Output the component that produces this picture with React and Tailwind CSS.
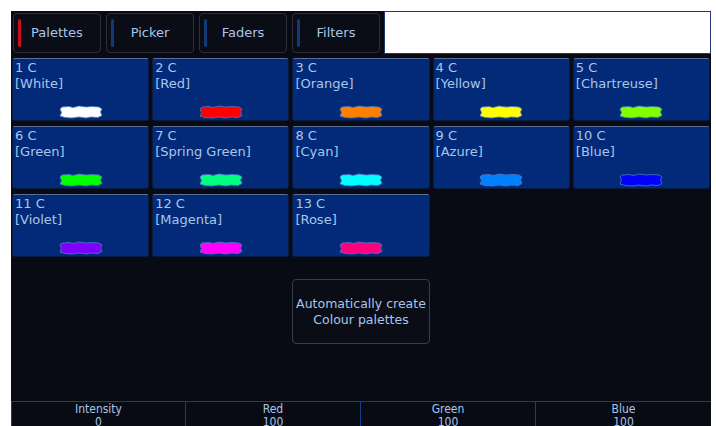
import React from 'react';

const tabs = [
  { label: 'Palettes', stripe: 'bg-[#c8101c]' },
  { label: 'Picker', stripe: 'bg-[#123a78]' },
  { label: 'Faders', stripe: 'bg-[#123a78]' },
  { label: 'Filters', stripe: 'bg-[#123a78]' },
];

const palettes = [
  { n: 1, name: 'White', color: '#ffffff' },
  { n: 2, name: 'Red', color: '#ff0000' },
  { n: 3, name: 'Orange', color: '#ff7f00' },
  { n: 4, name: 'Yellow', color: '#ffff00' },
  { n: 5, name: 'Chartreuse', color: '#7fff00' },
  { n: 6, name: 'Green', color: '#00ff00' },
  { n: 7, name: 'Spring Green', color: '#00ff7f' },
  { n: 8, name: 'Cyan', color: '#00ffff' },
  { n: 9, name: 'Azure', color: '#007fff' },
  { n: 10, name: 'Blue', color: '#0000ff' },
  { n: 11, name: 'Violet', color: '#7f00ff' },
  { n: 12, name: 'Magenta', color: '#ff00ff' },
  { n: 13, name: 'Rose', color: '#ff007f' },
];

const faders = [
  { label: 'Intensity', value: 0 },
  { label: 'Red', value: 100 },
  { label: 'Green', value: 100 },
  { label: 'Blue', value: 100 },
];

// brush-stroke blob used as the colour swatch
function Swatch({ color }) {
  return (
    <svg width="44" height="14" viewBox="0 0 44 14">
      <path
        d="M3 2 L10 1.5 L14 2.5 L20 1 L27 2 L33 1.5 L40 2 L43 4 L41.5 7 L43 10.5 L39 12.5 L32 12 L27 13 L20 12 L13 13 L6 12.5 L1 11 L2.5 7.5 L1 4 Z"
        fill={color}
        stroke="#4a78c8"
        strokeWidth="0.8"
      />
    </svg>
  );
}

function Tile({ p }) {
  return (
    <div className="h-[63px] rounded-[3px] border border-[#0a1a40] border-t-[#5a6e96] bg-[#022a78] flex flex-col px-[2px] pt-[1px] text-[13px] leading-[16px] text-[#a9c6ea]">
      <div>{p.n} C</div>
      <div>[{p.name}]</div>
      <div className="mt-auto flex justify-center pb-[1px]">
        <Swatch color={p.color} />
      </div>
    </div>
  );
}

export default function App() {
  return (
    <div className="w-[716px] h-[426px] bg-white pl-[11px] pt-[11px] overflow-hidden" style={{ fontFamily: '"DejaVu Sans", sans-serif' }}>
      <div className="w-[700px] h-[422px] bg-[#080a14] flex flex-col">
        <div className="h-[43px] flex items-stretch gap-[5px] pl-[2px] pt-[2px] pb-[1px]">
          {tabs.map((t) => (
            <div
              key={t.label}
              className="w-[88px] rounded-[4px] border border-[#2c2f38] bg-[#0a0c16] flex items-center relative"
            >
              <div className={`absolute left-[4px] top-[5px] bottom-[5px] w-[3px] rounded-sm ${t.stripe}`} />
              <span className="flex-1 text-center text-[13px] text-[#a9c6ea]">{t.label}</span>
            </div>
          ))}
          <div className="flex-1 -mt-[2px] -mb-[1px] -ml-[1px] bg-white border border-[#1d3a78]" />
        </div>

        <div className="grid grid-cols-5 gap-x-[3px] gap-y-[5px] px-[1px] pt-[4px]">
          {palettes.map((p) => (
            <Tile key={p.n} p={p} />
          ))}
        </div>

        <div className="grid grid-cols-5 gap-x-[3px] px-[1px] mt-[22px]">
          <div className="col-start-3 h-[65px] rounded-[4px] border border-[#3a3d46] bg-[#0a0c16] flex items-center justify-center text-center text-[12.5px] leading-[16px] text-[#a9c6ea]">
            Automatically create
            <br />
            Colour palettes
          </div>
        </div>

        <div className="mt-auto h-[32px] grid grid-cols-4 border-t border-[#14408a]">
          {faders.map((f, i) => (
            <div
              key={f.label}
              className={`flex flex-col items-center text-[12px] leading-[13px] text-[#a9c6ea] pt-[1px] ${i < 3 ? 'border-r border-[#14408a]' : ''} ${i === 0 ? 'border-l border-[#14408a]' : ''}`}
              style={{ fontFamily: '"DejaVu Sans Condensed", "DejaVu Sans", sans-serif' }}
            >
              <span>{f.label}</span>
              <span>{f.value}</span>
            </div>
          ))}
        </div>
      </div>
    </div>
  );
}
